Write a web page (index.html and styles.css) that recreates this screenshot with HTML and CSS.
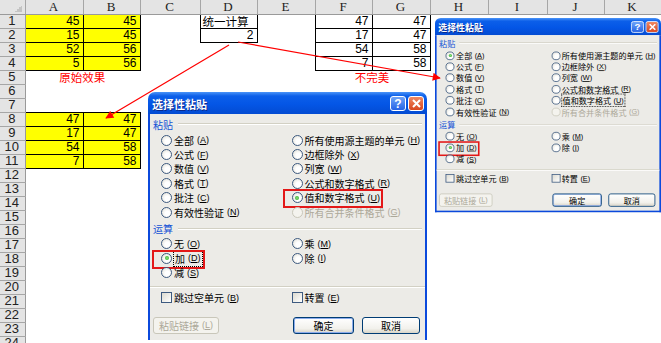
FILE: index.html
```html
<!DOCTYPE html>
<html>
<head>
    <meta charset="utf-8">
    <title>选择性粘贴 运算</title>
    <link rel="stylesheet" href="styles.css">
</head>
<body>
    <table class="sheet">
        <colgroup>
            <col class="w25"><col class="w58"><col class="w57"><col class="w60"><col class="w57"><col class="w58">
            <col class="w57"><col class="w58"><col class="w58"><col class="w59"><col class="w57"><col class="w57">
        </colgroup>
        <thead>
            <tr><th class="corner"></th><th>A</th><th>B</th><th>C</th><th>D</th><th>E</th><th>F</th><th>G</th><th>H</th><th>I</th><th>J</th><th>K</th></tr>
        </thead>
        <tbody>
            <tr><th>1</th><td class="y">45</td><td class="y">45</td><td></td><td class="box txt">统一计算</td><td></td><td class="box">47</td><td class="box">47</td><td colspan="4"></td></tr>
            <tr><th>2</th><td class="y">15</td><td class="y">45</td><td></td><td class="box">2</td><td></td><td class="box">17</td><td class="box">47</td><td colspan="4"></td></tr>
            <tr><th>3</th><td class="y">52</td><td class="y">56</td><td colspan="3"></td><td class="box">54</td><td class="box">58</td><td colspan="4"></td></tr>
            <tr><th>4</th><td class="y">5</td><td class="y">56</td><td colspan="3"></td><td class="box">7</td><td class="box">58</td><td colspan="4"></td></tr>
            <tr><th>5</th><td colspan="2" class="note">原始效果</td><td colspan="3"></td><td colspan="2" class="note">不完美</td><td colspan="4"></td></tr>
            <tr><th>6</th><td colspan="11"></td></tr>
            <tr><th>7</th><td colspan="11"></td></tr>
            <tr><th>8</th><td class="y">47</td><td class="y">47</td><td colspan="9"></td></tr>
            <tr><th>9</th><td class="y">17</td><td class="y">47</td><td colspan="9"></td></tr>
            <tr><th>10</th><td class="y">54</td><td class="y">58</td><td colspan="9"></td></tr>
            <tr><th>11</th><td class="y">7</td><td class="y">58</td><td colspan="9"></td></tr>
            <tr><th>12</th><td colspan="11"></td></tr>
            <tr><th>13</th><td colspan="11"></td></tr>
            <tr><th>14</th><td colspan="11"></td></tr>
            <tr><th>15</th><td colspan="11"></td></tr>
            <tr><th>16</th><td colspan="11"></td></tr>
            <tr><th>17</th><td colspan="11"></td></tr>
            <tr><th>18</th><td colspan="11"></td></tr>
            <tr><th>19</th><td colspan="11"></td></tr>
            <tr><th>20</th><td colspan="11"></td></tr>
            <tr><th>21</th><td colspan="11"></td></tr>
            <tr><th>22</th><td colspan="11"></td></tr>
            <tr><th>23</th><td colspan="11"></td></tr>
            <tr><th>24</th><td colspan="11"></td></tr>
        </tbody>
    </table>

    <!-- 大对话框：值和数字格式 + 加 -->
    <div class="dialog dialog_big">
        <div class="titlebar">
            <span class="title">选择性粘贴</span>
            <span class="tbtn help">?</span>
            <span class="tbtn close"><svg width="9" height="9" viewBox="0 0 9 9"><path d="M1 1L8 8M8 1L1 8" stroke="#fff" stroke-width="2"/></svg></span>
        </div>
        <div class="body">
            <div class="legend">粘贴</div>
            <div class="cols">
                <div class="col">
                    <div class="opt"><i class="radio"></i>全部<span class="key">(<u>A</u>)</span></div>
                    <div class="opt"><i class="radio"></i>公式<span class="key">(<u>F</u>)</span></div>
                    <div class="opt"><i class="radio"></i>数值<span class="key">(<u>V</u>)</span></div>
                    <div class="opt"><i class="radio"></i>格式<span class="key">(<u>T</u>)</span></div>
                    <div class="opt"><i class="radio"></i>批注<span class="key">(<u>C</u>)</span></div>
                    <div class="opt"><i class="radio"></i>有效性验证<span class="key">(<u>N</u>)</span></div>
                </div>
                <div class="col">
                    <div class="opt"><i class="radio"></i>所有使用源主题的单元<span class="key">(<u>H</u>)</span></div>
                    <div class="opt"><i class="radio"></i>边框除外<span class="key">(<u>X</u>)</span></div>
                    <div class="opt"><i class="radio"></i>列宽<span class="key">(<u>W</u>)</span></div>
                    <div class="opt"><i class="radio"></i>公式和数字格式<span class="key">(<u>R</u>)</span></div>
                    <div class="opt mark"><i class="radio on"></i>值和数字格式<span class="key">(<u>U</u>)</span></div>
                    <div class="opt off"><i class="radio"></i>所有合并条件格式<span class="key">(<u>G</u>)</span></div>
                </div>
            </div>
            <div class="legend legend_op">运算</div>
            <div class="cols cols_op">
                <div class="col">
                    <div class="opt"><i class="radio"></i>无<span class="key">(<u>O</u>)</span></div>
                    <div class="opt mark"><i class="radio on"></i><span class="focus">加<span class="key">(<u>D</u>)</span></span></div>
                    <div class="opt"><i class="radio"></i>减<span class="key">(<u>S</u>)</span></div>
                </div>
                <div class="col">
                    <div class="opt"><i class="radio"></i>乘<span class="key">(<u>M</u>)</span></div>
                    <div class="opt"><i class="radio"></i>除<span class="key">(<u>I</u>)</span></div>
                </div>
            </div>
            <div class="sep"></div>
            <div class="cols cols_chk">
                <div class="col"><div class="opt"><i class="check"></i>跳过空单元<span class="key">(<u>B</u>)</span></div></div>
                <div class="col"><div class="opt"><i class="check"></i>转置<span class="key">(<u>E</u>)</span></div></div>
            </div>
            <div class="btns">
                <span class="btn btn_link">粘贴链接<span class="key">(<u>L</u>)</span></span>
                <span class="btn btn_ok">确定</span>
                <span class="btn btn_cancel">取消</span>
            </div>
        </div>
    </div>

    <!-- 小对话框：全部 + 加 -->
    <div class="dialog dialog_small">
        <div class="titlebar">
            <span class="title">选择性粘贴</span>
            <span class="tbtn help">?</span>
            <span class="tbtn close"><svg width="9" height="9" viewBox="0 0 9 9"><path d="M1 1L8 8M8 1L1 8" stroke="#fff" stroke-width="2"/></svg></span>
        </div>
        <div class="body">
            <div class="legend">粘贴</div>
            <div class="cols">
                <div class="col">
                    <div class="opt"><i class="radio on"></i>全部<span class="key">(<u>A</u>)</span></div>
                    <div class="opt"><i class="radio"></i>公式<span class="key">(<u>F</u>)</span></div>
                    <div class="opt"><i class="radio"></i>数值<span class="key">(<u>V</u>)</span></div>
                    <div class="opt"><i class="radio"></i>格式<span class="key">(<u>T</u>)</span></div>
                    <div class="opt"><i class="radio"></i>批注<span class="key">(<u>C</u>)</span></div>
                    <div class="opt"><i class="radio"></i>有效性验证<span class="key">(<u>N</u>)</span></div>
                </div>
                <div class="col">
                    <div class="opt"><i class="radio"></i>所有使用源主题的单元<span class="key">(<u>H</u>)</span></div>
                    <div class="opt"><i class="radio"></i>边框除外<span class="key">(<u>X</u>)</span></div>
                    <div class="opt"><i class="radio"></i>列宽<span class="key">(<u>W</u>)</span></div>
                    <div class="opt"><i class="radio"></i>公式和数字格式<span class="key">(<u>R</u>)</span></div>
                    <div class="opt"><i class="radio"></i><span class="focus">值和数字格式<span class="key">(<u>U</u>)</span></span></div>
                    <div class="opt off"><i class="radio"></i>所有合并条件格式<span class="key">(<u>G</u>)</span></div>
                </div>
            </div>
            <div class="legend legend_op">运算</div>
            <div class="cols cols_op">
                <div class="col">
                    <div class="opt"><i class="radio"></i>无<span class="key">(<u>O</u>)</span></div>
                    <div class="opt mark"><i class="radio on"></i>加<span class="key">(<u>D</u>)</span></div>
                    <div class="opt"><i class="radio"></i>减<span class="key">(<u>S</u>)</span></div>
                </div>
                <div class="col">
                    <div class="opt"><i class="radio"></i>乘<span class="key">(<u>M</u>)</span></div>
                    <div class="opt"><i class="radio"></i>除<span class="key">(<u>I</u>)</span></div>
                </div>
            </div>
            <div class="sep"></div>
            <div class="cols cols_chk">
                <div class="col"><div class="opt"><i class="check"></i>跳过空单元<span class="key">(<u>B</u>)</span></div></div>
                <div class="col"><div class="opt"><i class="check"></i>转置<span class="key">(<u>E</u>)</span></div></div>
            </div>
            <div class="btns">
                <span class="btn btn_link">粘贴链接<span class="key">(<u>L</u>)</span></span>
                <span class="btn btn_ok">确定</span>
                <span class="btn btn_cancel">取消</span>
            </div>
        </div>
    </div>

    <!-- 红色箭头 -->
    <svg class="arrows" width="661" height="343" viewBox="0 0 661 343">
        <defs>
            <marker id="head" viewBox="0 0 10 10" refX="9" refY="5" markerUnits="userSpaceOnUse" markerWidth="10" markerHeight="8" orient="auto">
                <path d="M0 0L10 5L0 10z" fill="#f00"/>
            </marker>
        </defs>
        <line x1="238" y1="42" x2="440" y2="78" stroke="#f00" stroke-width="1.2" marker-end="url(#head)"/>
        <line x1="229" y1="45" x2="106" y2="118" stroke="#f00" stroke-width="1.2" marker-end="url(#head)"/>
    </svg>
</body>
</html>
```

FILE: styles.css
```css
*{
    box-sizing: border-box;
    margin: 0;
    padding: 0;
}
body{
    position: relative;
    width: 661px;
    height: 343px;
    overflow: hidden;
    background: #fff;
    font-family: "Liberation Sans", sans-serif;
}

/* 表格 */
.sheet{
    border-collapse: collapse;
    table-layout: fixed;
    width: 661px;
    font-size: 12px;
    color: #000;
}
.w25{ width: 25px; }
.w57{ width: 57px; }
.w58{ width: 58px; }
.w59{ width: 59px; }
.w60{ width: 60px; }
.sheet tr{
    height: 14px;
}
.sheet th,.sheet td{
    padding: 0 3px 0 2px;
    line-height: 12px;
    white-space: nowrap;
}
.sheet th{
    background: #e4e4e4;
    font-weight: normal;
    color: #222;
    text-align: center;
}
.sheet thead th{
    border-right: 1px solid #a6a6a6;
    border-bottom: 1px solid #9a9a9a;
    font-family: "Liberation Serif", serif;
    font-size: 13px;
}
.sheet thead th.corner{
    background: linear-gradient(135deg, transparent 50%, #c4c4c4 50%) no-repeat right 3px bottom 2px / 7px 7px, #e4e4e4;
}
.sheet tbody th{
    border-right: 1px solid #9a9a9a;
    border-bottom: 1px solid #a6a6a6;
    font-size: 13px;
}
.y,.box{
    border: 1px solid #000;
    text-align: right;
}
.y{
    background: #ff0;
}
.txt{
    text-align: left;
    font-family: "Noto Sans CJK SC", sans-serif;
    font-size: 11.5px;
    padding-left: 1px;
}
.note{
    color: #f00;
    text-align: center;
    font-family: "Noto Sans CJK SC", sans-serif;
    font-size: 11.5px;
}

/* 箭头 */
.arrows{
    position: absolute;
    left: 0;
    top: 0;
    z-index: 3;
    pointer-events: none;
}

/* 对话框 */
.dialog{
    position: absolute;
    z-index: 2;
    width: 279px;
    display: flex;
    flex-direction: column;
    font-family: "Noto Sans CJK SC", sans-serif;
    font-size: 10px;
    color: #000;
}
.dialog_big{
    left: 148px;
    top: 92px;
    height: 248px;
}
.dialog_big .body{
    border-bottom: 0;
}
.dialog_small{
    left: 435px;
    top: 18px;
    height: 249px;
    transform: scale(0.81, 0.78);
    transform-origin: 0 0;
}
.titlebar{
    height: 22px;
    display: flex;
    align-items: center;
    gap: 2px;
    padding: 1px 3px 0 4px;
    border-radius: 7px 7px 0 0;
    background: linear-gradient(#4a94f8, #0c5fe9 4px, #0456e6 55%, #034bd2);
}
.title{
    flex: 1;
    color: #fff;
    font-size: 11px;
    font-weight: bold;
    text-shadow: 1px 1px #0b2a8c;
}
.tbtn{
    width: 16px;
    height: 15px;
    border: 1px solid #fff;
    border-radius: 3px;
    display: flex;
    align-items: center;
    justify-content: center;
    color: #fff;
    font-family: "Liberation Sans", sans-serif;
    font-weight: bold;
    font-size: 12px;
}
.help{
    background: linear-gradient(#6fa4f8, #2563e6);
}
.close{
    background: linear-gradient(#f08a63, #d8461e);
}
.body{
    flex: 1;
    background: #ecebe7;
    border: 2px solid #0b49dc;
    border-top: 0;
    padding: 3px 3px 0;
}
.legend{
    height: 14px;
    display: flex;
    align-items: center;
    color: #1553d6;
}
.legend::after{
    content: "";
    flex: 1;
    margin-left: 5px;
    border-top: 1px solid #d2d0c4;
    border-bottom: 1px solid #fff;
}
.legend_op{
    margin-top: 2.6px;
}
.cols{
    display: flex;
    margin-top: 2px;
    padding-left: 8px;
}
.cols_op{
    margin-top: 0.8px;
}
.col{
    width: 134px;
}
.opt{
    position: relative;
    width: max-content;
    height: 14.4px;
    display: flex;
    align-items: center;
    white-space: nowrap;
}
.opt.off{
    color: #aca899;
}
.key{
    margin-left: 3px;
    font-family: "Liberation Sans", sans-serif;
    font-size: 9px;
}
.radio{
    position: relative;
    width: 11px;
    height: 11px;
    margin-right: 2px;
    border: 1px solid #3d5a80;
    border-radius: 50%;
    background: radial-gradient(circle at 60% 60%, #fff 30%, #dedcd2);
}
.off .radio{
    border-color: #c9c7ba;
    background: #f4f3ee;
}
.radio.on::after{
    content: "";
    position: absolute;
    left: 2.5px;
    top: 2.5px;
    width: 4px;
    height: 4px;
    border-radius: 50%;
    background: radial-gradient(#8ee37c, #21a121);
}
.focus{
    display: flex;
    align-items: center;
    padding: 0 1px;
    outline: 1px dotted #000;
}
.mark::before{
    content: "";
    position: absolute;
    left: -9px;
    right: -3px;
    top: -1.5px;
    bottom: -3px;
    border: 2px solid #e31818;
}
.sep{
    margin: 6px -3px 0;
    border-top: 1px solid #d2d0c4;
    border-bottom: 1px solid #fff;
}
.cols_chk{
    margin-top: 3px;
}
.cols_chk .opt{
    height: 14px;
}
.check{
    width: 11px;
    height: 11px;
    margin-right: 2px;
    border: 1px solid #3d5a80;
    background: linear-gradient(135deg, #dcdad0, #fff);
}
.btns{
    display: flex;
    margin-top: 12px;
}
.btn{
    height: 17px;
    display: flex;
    align-items: center;
    justify-content: center;
    border: 1px solid #003c74;
    border-radius: 3px;
    background: linear-gradient(#fff, #f2f1ec 70%, #d9d5c8);
}
.btn_link{
    width: 66px;
    color: #aca899;
    border-color: #c9c7ba;
    background: #f4f3ee;
}
.btn_ok{
    width: 61px;
    margin-left: 74px;
    box-shadow: inset 0 0 0 1px #8cacec;
}
.btn_cancel{
    width: 58px;
    margin-left: 8px;
}
```
